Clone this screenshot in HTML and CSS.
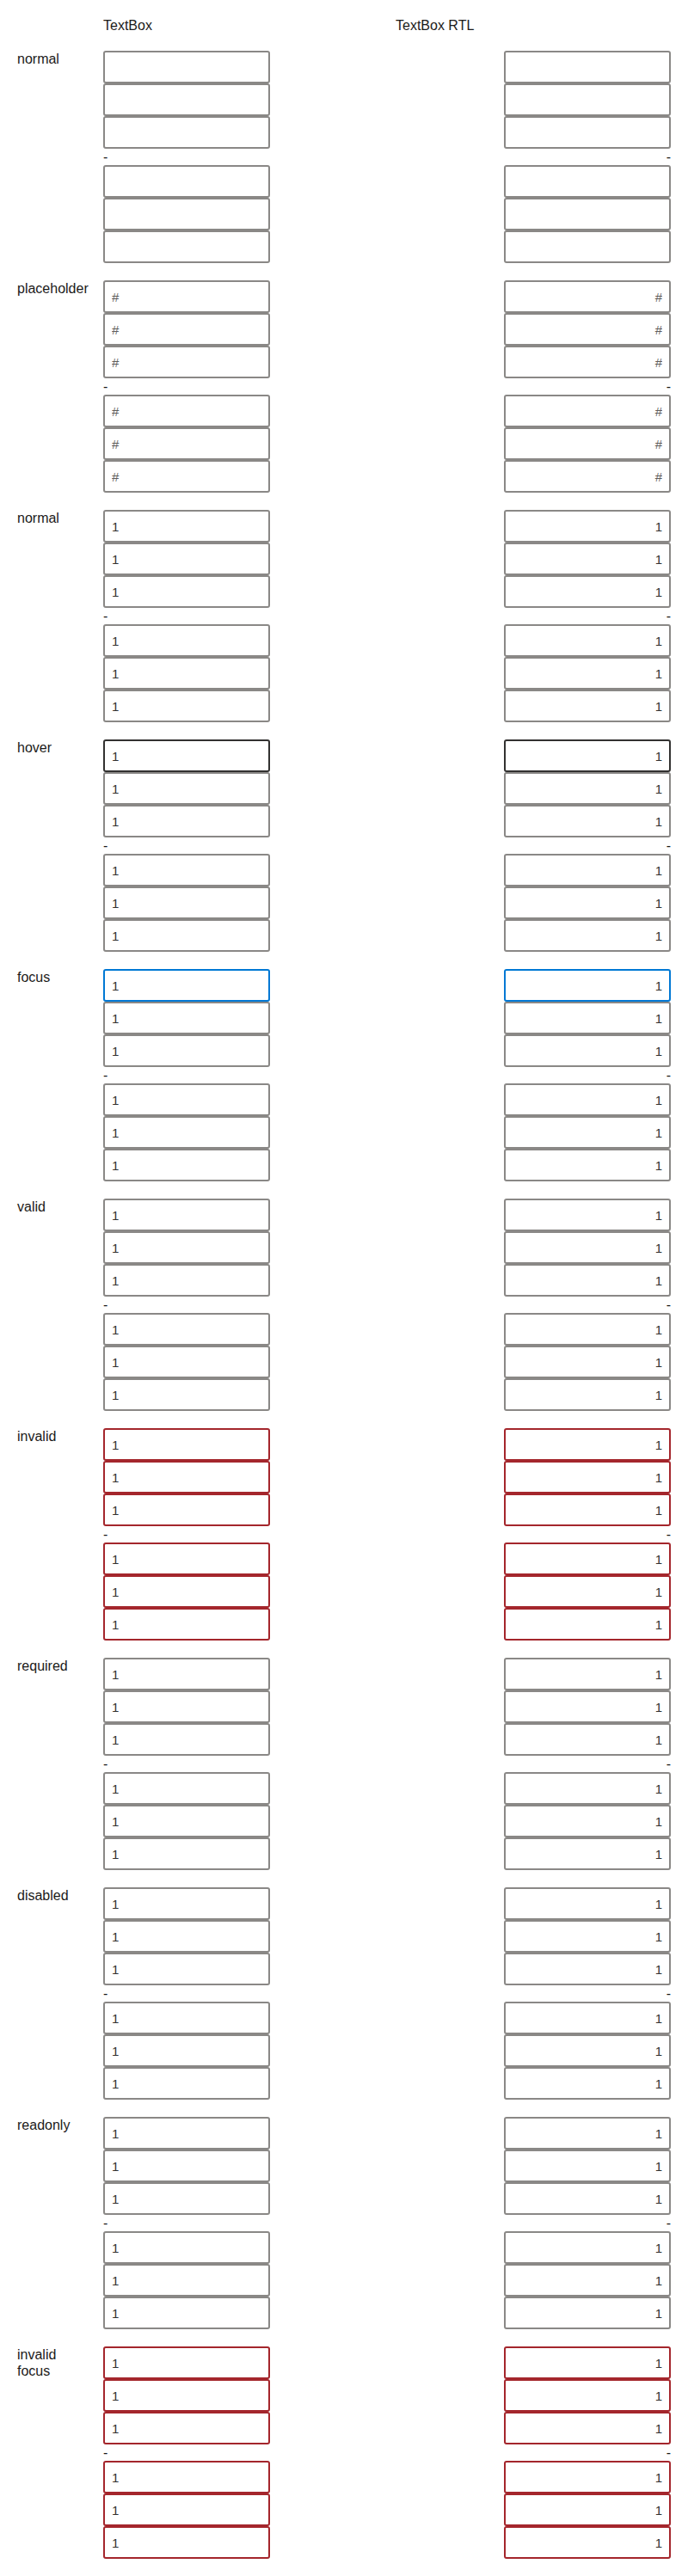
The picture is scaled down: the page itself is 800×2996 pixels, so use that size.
FILE: index.html
```html
<!DOCTYPE html>
<html lang="en">
<head>
  <meta charset="UTF-8">
  <title>TextBox states</title>
  <link rel="stylesheet" href="styles.css">
</head>
<body>
  <div class="matrix">
    <div class="head"></div>
    <div class="head">TextBox</div>
    <div class="head">TextBox RTL</div>

    <!-- normal, empty -->
    <div class="label">normal</div>
    <div class="cell">
      <input class="tb"><input class="tb"><input class="tb">
      <div class="sep">-</div>
      <input class="tb"><input class="tb"><input class="tb">
    </div>
    <div class="cell" dir="rtl">
      <input class="tb"><input class="tb"><input class="tb">
      <div class="sep">-</div>
      <input class="tb"><input class="tb"><input class="tb">
    </div>

    <!-- placeholder -->
    <div class="label">placeholder</div>
    <div class="cell">
      <input class="tb" placeholder="#"><input class="tb" placeholder="#"><input class="tb" placeholder="#">
      <div class="sep">-</div>
      <input class="tb" placeholder="#"><input class="tb" placeholder="#"><input class="tb" placeholder="#">
    </div>
    <div class="cell" dir="rtl">
      <input class="tb" placeholder="#"><input class="tb" placeholder="#"><input class="tb" placeholder="#">
      <div class="sep">-</div>
      <input class="tb" placeholder="#"><input class="tb" placeholder="#"><input class="tb" placeholder="#">
    </div>

    <!-- normal with value -->
    <div class="label">normal</div>
    <div class="cell">
      <input class="tb" value="1"><input class="tb" value="1"><input class="tb" value="1">
      <div class="sep">-</div>
      <input class="tb" value="1"><input class="tb" value="1"><input class="tb" value="1">
    </div>
    <div class="cell" dir="rtl">
      <input class="tb" value="1"><input class="tb" value="1"><input class="tb" value="1">
      <div class="sep">-</div>
      <input class="tb" value="1"><input class="tb" value="1"><input class="tb" value="1">
    </div>

    <!-- hover -->
    <div class="label">hover</div>
    <div class="cell">
      <input class="tb is-hover" value="1"><input class="tb" value="1"><input class="tb" value="1">
      <div class="sep">-</div>
      <input class="tb" value="1"><input class="tb" value="1"><input class="tb" value="1">
    </div>
    <div class="cell" dir="rtl">
      <input class="tb is-hover" value="1"><input class="tb" value="1"><input class="tb" value="1">
      <div class="sep">-</div>
      <input class="tb" value="1"><input class="tb" value="1"><input class="tb" value="1">
    </div>

    <!-- focus -->
    <div class="label">focus</div>
    <div class="cell">
      <input class="tb is-focus" value="1"><input class="tb" value="1"><input class="tb" value="1">
      <div class="sep">-</div>
      <input class="tb" value="1"><input class="tb" value="1"><input class="tb" value="1">
    </div>
    <div class="cell" dir="rtl">
      <input class="tb is-focus" value="1"><input class="tb" value="1"><input class="tb" value="1">
      <div class="sep">-</div>
      <input class="tb" value="1"><input class="tb" value="1"><input class="tb" value="1">
    </div>

    <!-- valid -->
    <div class="label">valid</div>
    <div class="cell">
      <input class="tb" value="1"><input class="tb" value="1"><input class="tb" value="1">
      <div class="sep">-</div>
      <input class="tb" value="1"><input class="tb" value="1"><input class="tb" value="1">
    </div>
    <div class="cell" dir="rtl">
      <input class="tb" value="1"><input class="tb" value="1"><input class="tb" value="1">
      <div class="sep">-</div>
      <input class="tb" value="1"><input class="tb" value="1"><input class="tb" value="1">
    </div>

    <!-- invalid -->
    <div class="label">invalid</div>
    <div class="cell">
      <input class="tb is-invalid" value="1"><input class="tb is-invalid" value="1"><input class="tb is-invalid" value="1">
      <div class="sep">-</div>
      <input class="tb is-invalid" value="1"><input class="tb is-invalid" value="1"><input class="tb is-invalid" value="1">
    </div>
    <div class="cell" dir="rtl">
      <input class="tb is-invalid" value="1"><input class="tb is-invalid" value="1"><input class="tb is-invalid" value="1">
      <div class="sep">-</div>
      <input class="tb is-invalid" value="1"><input class="tb is-invalid" value="1"><input class="tb is-invalid" value="1">
    </div>

    <!-- required -->
    <div class="label">required</div>
    <div class="cell">
      <input class="tb" value="1"><input class="tb" value="1"><input class="tb" value="1">
      <div class="sep">-</div>
      <input class="tb" value="1"><input class="tb" value="1"><input class="tb" value="1">
    </div>
    <div class="cell" dir="rtl">
      <input class="tb" value="1"><input class="tb" value="1"><input class="tb" value="1">
      <div class="sep">-</div>
      <input class="tb" value="1"><input class="tb" value="1"><input class="tb" value="1">
    </div>

    <!-- disabled -->
    <div class="label">disabled</div>
    <div class="cell">
      <input class="tb" value="1" readonly><input class="tb" value="1" readonly><input class="tb" value="1" readonly>
      <div class="sep">-</div>
      <input class="tb" value="1" readonly><input class="tb" value="1" readonly><input class="tb" value="1" readonly>
    </div>
    <div class="cell" dir="rtl">
      <input class="tb" value="1" readonly><input class="tb" value="1" readonly><input class="tb" value="1" readonly>
      <div class="sep">-</div>
      <input class="tb" value="1" readonly><input class="tb" value="1" readonly><input class="tb" value="1" readonly>
    </div>

    <!-- readonly -->
    <div class="label">readonly</div>
    <div class="cell">
      <input class="tb" value="1" readonly><input class="tb" value="1" readonly><input class="tb" value="1" readonly>
      <div class="sep">-</div>
      <input class="tb" value="1" readonly><input class="tb" value="1" readonly><input class="tb" value="1" readonly>
    </div>
    <div class="cell" dir="rtl">
      <input class="tb" value="1" readonly><input class="tb" value="1" readonly><input class="tb" value="1" readonly>
      <div class="sep">-</div>
      <input class="tb" value="1" readonly><input class="tb" value="1" readonly><input class="tb" value="1" readonly>
    </div>

    <!-- invalid focus -->
    <div class="label">invalid focus</div>
    <div class="cell">
      <input class="tb is-invalid" value="1"><input class="tb is-invalid" value="1"><input class="tb is-invalid" value="1">
      <div class="sep">-</div>
      <input class="tb is-invalid" value="1"><input class="tb is-invalid" value="1"><input class="tb is-invalid" value="1">
    </div>
    <div class="cell" dir="rtl">
      <input class="tb is-invalid" value="1"><input class="tb is-invalid" value="1"><input class="tb is-invalid" value="1">
      <div class="sep">-</div>
      <input class="tb is-invalid" value="1"><input class="tb is-invalid" value="1"><input class="tb is-invalid" value="1">
    </div>
  </div>
</body>
</html>
```

FILE: styles.css
```css
body {
  margin: 0;
  padding: 20px;
  font-family: "Liberation Sans", Arial, sans-serif;
  font-size: 16px;
  color: #1b1a19;
  background: #ffffff;
}
.matrix {
  display: grid;
  grid-template-columns: 100px 340px 320px;
  row-gap: 20px;
}
.head {
  height: 19px;
  line-height: 19px;
}
.label {
  line-height: 19px;
  padding-right: 20px;
}
.cell {
  display: flex;
  flex-direction: column;
  align-items: flex-start;
}
.sep {
  height: 19px;
  line-height: 19px;
}
.tb {
  display: block;
  box-sizing: border-box;
  width: 194px;
  height: 38px;
  margin: 0;
  padding: 0 8px;
  border: 2px solid #8a8886;
  border-radius: 3px;
  background: #ffffff;
  font-family: "Liberation Sans", Arial, sans-serif;
  font-size: 15px;
  color: #323130;
  outline: none;
}
.tb::placeholder {
  color: #605e5c;
  opacity: 1;
}
.tb.is-hover {
  border-color: #323130;
}
.tb.is-focus {
  border-color: #0078d4;
}
.tb.is-invalid {
  border-color: #a4262c;
}
```
